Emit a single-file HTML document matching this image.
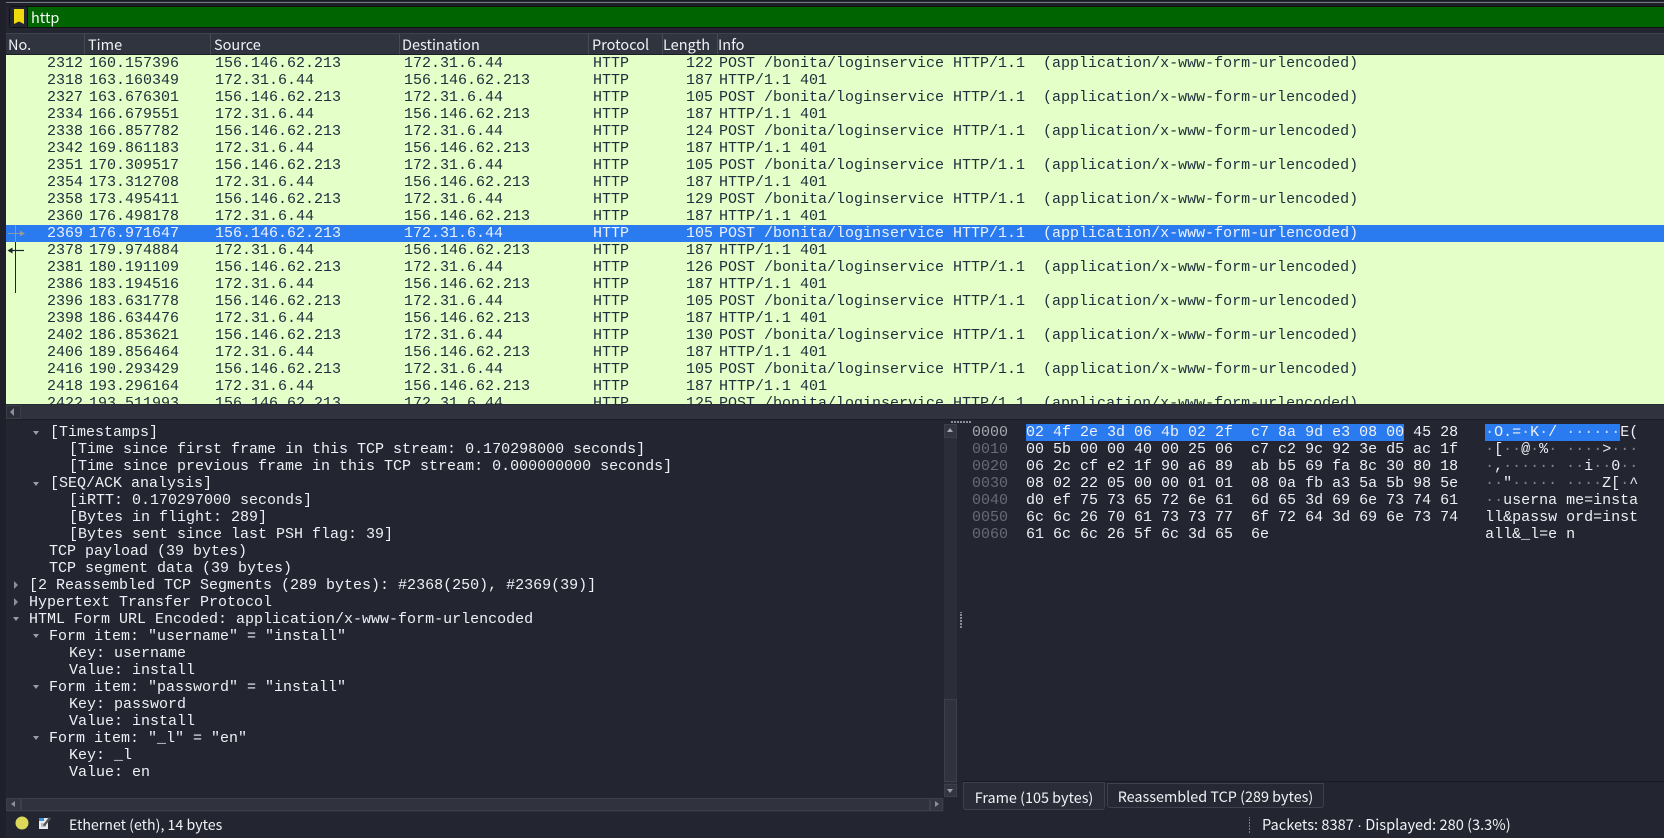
<!DOCTYPE html>
<html><head><meta charset="utf-8"><style>
html,body{margin:0;padding:0;width:1664px;height:838px;overflow:hidden;background:#232530}
*{box-sizing:border-box}
.a{position:absolute}
#app{position:relative;width:1664px;height:838px;overflow:hidden;background:#232530;font-family:"Liberation Mono",monospace;font-size:15px;color:#eef0f5}
.ui{font-family:"Noto Sans CJK SC","Liberation Sans",sans-serif}
.r{position:absolute;left:6px;width:1658px;height:17px;line-height:17px;background:#e4ffc7;color:#1f2d3d;white-space:pre}
.r span{position:absolute;top:0}
.n{right:1581px;text-align:right}.t{left:83px}.s{left:209px}.d{left:398px}.p{left:587px}.l{right:951px;text-align:right}.i{left:713px}
.sel{background:#2a7af0;color:#eaf2ff}
.h{position:absolute;top:33px;height:22px;background:#30343f;border-right:1px solid #454a55;border-top:1px solid #3f434e;border-bottom:1px solid #1c1e26;font-size:14.5px;line-height:22px;padding-left:2px;color:#f0f2f5;white-space:nowrap;overflow:hidden}
.tr{position:absolute;height:17px;line-height:17px;white-space:pre}
.hx{position:absolute;left:972px;height:17px;line-height:17px;white-space:pre}
.hx b{font-weight:normal;color:#666b75}
.dm{color:#7d828c}
.dw{color:#c9dcfb}
.tl{position:absolute;width:0;height:0}
.dn{border-left:3.5px solid transparent;border-right:3.5px solid transparent;border-top:4px solid #9a9da5}
.rt{border-top:4px solid transparent;border-bottom:4px solid transparent;border-left:4.5px solid #8d9099}
.btn{position:absolute;background:#333641;border:1px solid #3d404b}
.tb{position:absolute;background:#2a2d38;border:1px solid #3e414c;font-size:14.4px;text-align:center;color:#f0f2f5;border-radius:0 0 3px 3px;white-space:nowrap}
</style></head><body><div id="app">
<div class="a" style="left:0;top:0;width:1664px;height:1px;background:#1b1c23"></div>
<div class="a" style="left:0;top:2px;width:1664px;height:1px;background:#767984"></div>
<div class="a" style="left:0;top:3px;width:1664px;height:3px;background:#1d1f27"></div>

<div class="a" style="left:9px;top:6px;width:1655px;height:22px;background:#006400;border:1px solid #111;border-right:0;border-radius:3px 0 0 3px"></div>
<div class="a" style="left:10px;top:7px;width:18px;height:20px;background:#232530;border-right:1px solid #111"></div>
<svg class="a" style="left:13px;top:9px" width="12" height="16" viewBox="0 0 12 16"><path d="M1 0H11V15L6 12.5 1 15Z" fill="#eed90a"/></svg>
<div class="a ui" style="left:31px;top:8px;font-size:14.5px;line-height:20px;color:#f4fbf4">http</div>

<div class="h ui" style="left:6px;width:79px">No.</div>
<div class="h ui" style="left:85px;width:126px;padding-left:3px">Time</div>
<div class="h ui" style="left:211px;width:189px;padding-left:3px">Source</div>
<div class="h ui" style="left:400px;width:189px;padding-left:2px">Destination</div>
<div class="h ui" style="left:589px;width:74px;padding-left:3px">Protocol</div>
<div class="h ui" style="left:663px;width:55px;padding-left:0">Length</div>
<div class="h ui" style="left:718px;width:946px;border-right:0;padding-left:0">Info</div>

<div class="a" style="left:0;top:55px;width:1664px;height:349px;overflow:hidden">
<div style="position:absolute;left:0;top:-55px;width:1664px;height:500px">
<div class="r" style="top:55px"><span class="n">2312</span><span class="t">160.157396</span><span class="s">156.146.62.213</span><span class="d">172.31.6.44</span><span class="p">HTTP</span><span class="l">122</span><span class="i">POST /bonita/loginservice HTTP/1.1  (application/x-www-form-urlencoded)</span></div>
<div class="r" style="top:72px"><span class="n">2318</span><span class="t">163.160349</span><span class="s">172.31.6.44</span><span class="d">156.146.62.213</span><span class="p">HTTP</span><span class="l">187</span><span class="i">HTTP/1.1 401</span></div>
<div class="r" style="top:89px"><span class="n">2327</span><span class="t">163.676301</span><span class="s">156.146.62.213</span><span class="d">172.31.6.44</span><span class="p">HTTP</span><span class="l">105</span><span class="i">POST /bonita/loginservice HTTP/1.1  (application/x-www-form-urlencoded)</span></div>
<div class="r" style="top:106px"><span class="n">2334</span><span class="t">166.679551</span><span class="s">172.31.6.44</span><span class="d">156.146.62.213</span><span class="p">HTTP</span><span class="l">187</span><span class="i">HTTP/1.1 401</span></div>
<div class="r" style="top:123px"><span class="n">2338</span><span class="t">166.857782</span><span class="s">156.146.62.213</span><span class="d">172.31.6.44</span><span class="p">HTTP</span><span class="l">124</span><span class="i">POST /bonita/loginservice HTTP/1.1  (application/x-www-form-urlencoded)</span></div>
<div class="r" style="top:140px"><span class="n">2342</span><span class="t">169.861183</span><span class="s">172.31.6.44</span><span class="d">156.146.62.213</span><span class="p">HTTP</span><span class="l">187</span><span class="i">HTTP/1.1 401</span></div>
<div class="r" style="top:157px"><span class="n">2351</span><span class="t">170.309517</span><span class="s">156.146.62.213</span><span class="d">172.31.6.44</span><span class="p">HTTP</span><span class="l">105</span><span class="i">POST /bonita/loginservice HTTP/1.1  (application/x-www-form-urlencoded)</span></div>
<div class="r" style="top:174px"><span class="n">2354</span><span class="t">173.312708</span><span class="s">172.31.6.44</span><span class="d">156.146.62.213</span><span class="p">HTTP</span><span class="l">187</span><span class="i">HTTP/1.1 401</span></div>
<div class="r" style="top:191px"><span class="n">2358</span><span class="t">173.495411</span><span class="s">156.146.62.213</span><span class="d">172.31.6.44</span><span class="p">HTTP</span><span class="l">129</span><span class="i">POST /bonita/loginservice HTTP/1.1  (application/x-www-form-urlencoded)</span></div>
<div class="r" style="top:208px"><span class="n">2360</span><span class="t">176.498178</span><span class="s">172.31.6.44</span><span class="d">156.146.62.213</span><span class="p">HTTP</span><span class="l">187</span><span class="i">HTTP/1.1 401</span></div>
<div class="r sel" style="top:225px"><span class="n">2369</span><span class="t">176.971647</span><span class="s">156.146.62.213</span><span class="d">172.31.6.44</span><span class="p">HTTP</span><span class="l">105</span><span class="i">POST /bonita/loginservice HTTP/1.1  (application/x-www-form-urlencoded)</span></div>
<div class="r" style="top:242px"><span class="n">2378</span><span class="t">179.974884</span><span class="s">172.31.6.44</span><span class="d">156.146.62.213</span><span class="p">HTTP</span><span class="l">187</span><span class="i">HTTP/1.1 401</span></div>
<div class="r" style="top:259px"><span class="n">2381</span><span class="t">180.191109</span><span class="s">156.146.62.213</span><span class="d">172.31.6.44</span><span class="p">HTTP</span><span class="l">126</span><span class="i">POST /bonita/loginservice HTTP/1.1  (application/x-www-form-urlencoded)</span></div>
<div class="r" style="top:276px"><span class="n">2386</span><span class="t">183.194516</span><span class="s">172.31.6.44</span><span class="d">156.146.62.213</span><span class="p">HTTP</span><span class="l">187</span><span class="i">HTTP/1.1 401</span></div>
<div class="r" style="top:293px"><span class="n">2396</span><span class="t">183.631778</span><span class="s">156.146.62.213</span><span class="d">172.31.6.44</span><span class="p">HTTP</span><span class="l">105</span><span class="i">POST /bonita/loginservice HTTP/1.1  (application/x-www-form-urlencoded)</span></div>
<div class="r" style="top:310px"><span class="n">2398</span><span class="t">186.634476</span><span class="s">172.31.6.44</span><span class="d">156.146.62.213</span><span class="p">HTTP</span><span class="l">187</span><span class="i">HTTP/1.1 401</span></div>
<div class="r" style="top:327px"><span class="n">2402</span><span class="t">186.853621</span><span class="s">156.146.62.213</span><span class="d">172.31.6.44</span><span class="p">HTTP</span><span class="l">130</span><span class="i">POST /bonita/loginservice HTTP/1.1  (application/x-www-form-urlencoded)</span></div>
<div class="r" style="top:344px"><span class="n">2406</span><span class="t">189.856464</span><span class="s">172.31.6.44</span><span class="d">156.146.62.213</span><span class="p">HTTP</span><span class="l">187</span><span class="i">HTTP/1.1 401</span></div>
<div class="r" style="top:361px"><span class="n">2416</span><span class="t">190.293429</span><span class="s">156.146.62.213</span><span class="d">172.31.6.44</span><span class="p">HTTP</span><span class="l">105</span><span class="i">POST /bonita/loginservice HTTP/1.1  (application/x-www-form-urlencoded)</span></div>
<div class="r" style="top:378px"><span class="n">2418</span><span class="t">193.296164</span><span class="s">172.31.6.44</span><span class="d">156.146.62.213</span><span class="p">HTTP</span><span class="l">187</span><span class="i">HTTP/1.1 401</span></div>
<div class="r" style="top:395px"><span class="n">2422</span><span class="t">193.511993</span><span class="s">156.146.62.213</span><span class="d">172.31.6.44</span><span class="p">HTTP</span><span class="l">125</span><span class="i">POST /bonita/loginservice HTTP/1.1  (application/x-www-form-urlencoded)</span></div>
</div></div>

<svg class="a" style="left:6px;top:225px" width="24" height="70" viewBox="0 0 24 70">
<path d="M2 8.5H17" stroke="#8f9aa8" stroke-width="1" fill="none"/><path d="M9.5 0V17" stroke="#8f9aa8" stroke-width="1"/><path d="M14 5.5L19 8.5 14 11.5Z" fill="#8f9aa8"/>
<path d="M3 25.5H18" stroke="#1b2330" stroke-width="1.2" fill="none"/><path d="M1.5 25.5L6.5 22.5V28.5Z" fill="#1b2330"/><path d="M9.5 17V68" stroke="#1b2330" stroke-width="1"/>
</svg>

<div class="a" style="left:6px;top:404px;width:1658px;height:16px;background:#262833"></div>
<div class="a" style="left:6px;top:405px;width:1658px;height:14px;background:#30333e"></div>
<div class="btn" style="left:6px;top:405px;width:15px;height:14px;background:#2b2e39"></div>
<div class="tl" style="left:10px;top:408px;border-top:4px solid transparent;border-bottom:4px solid transparent;border-right:4.5px solid #8d9099"></div>
<div class="a" style="left:0;top:419px;width:1664px;height:1px;background:#1c1e25"></div>
<div class="a" style="left:0;top:0;width:6px;height:838px;background:#1f2029;z-index:0"></div>
<div class="a" style="left:951px;top:421px;width:20px;height:2px;background-image:repeating-linear-gradient(90deg,#8a8d95 0 2px,transparent 2px 3px)"></div>

<div class="tr" style="left:50px;top:424px">[Timestamps]</div>
<div class="tr" style="left:69px;top:441px">[Time since first frame in this TCP stream: 0.170298000 seconds]</div>
<div class="tr" style="left:69px;top:458px">[Time since previous frame in this TCP stream: 0.000000000 seconds]</div>
<div class="tr" style="left:50px;top:475px">[SEQ/ACK analysis]</div>
<div class="tr" style="left:69px;top:492px">[iRTT: 0.170297000 seconds]</div>
<div class="tr" style="left:69px;top:509px">[Bytes in flight: 289]</div>
<div class="tr" style="left:69px;top:526px">[Bytes sent since last PSH flag: 39]</div>
<div class="tr" style="left:49px;top:543px">TCP payload (39 bytes)</div>
<div class="tr" style="left:49px;top:560px">TCP segment data (39 bytes)</div>
<div class="tr" style="left:29px;top:577px">[2 Reassembled TCP Segments (289 bytes): #2368(250), #2369(39)]</div>
<div class="tr" style="left:29px;top:594px">Hypertext Transfer Protocol</div>
<div class="tr" style="left:29px;top:611px">HTML Form URL Encoded: application/x-www-form-urlencoded</div>
<div class="tr" style="left:49px;top:628px">Form item: "username" = "install"</div>
<div class="tr" style="left:69px;top:645px">Key: username</div>
<div class="tr" style="left:69px;top:662px">Value: install</div>
<div class="tr" style="left:49px;top:679px">Form item: "password" = "install"</div>
<div class="tr" style="left:69px;top:696px">Key: password</div>
<div class="tr" style="left:69px;top:713px">Value: install</div>
<div class="tr" style="left:49px;top:730px">Form item: "_l" = "en"</div>
<div class="tr" style="left:69px;top:747px">Key: _l</div>
<div class="tr" style="left:69px;top:764px">Value: en</div>

<div class="tl dn" style="left:33px;top:431px"></div>
<div class="tl dn" style="left:33px;top:482px"></div>
<div class="tl rt" style="left:14px;top:581px"></div>
<div class="tl rt" style="left:14px;top:598px"></div>
<div class="tl dn" style="left:13px;top:617px"></div>
<div class="tl dn" style="left:33px;top:634px"></div>
<div class="tl dn" style="left:33px;top:685px"></div>
<div class="tl dn" style="left:33px;top:736px"></div>

<!-- vertical scrollbar -->
<div class="a" style="left:944px;top:424px;width:13px;height:372px;background:#2b2e38"></div>
<div class="btn" style="left:944px;top:424px;width:13px;height:14px"></div>
<div class="tl" style="left:947px;top:428px;border-left:3.5px solid transparent;border-right:3.5px solid transparent;border-bottom:4px solid #a7a9b0"></div>
<div class="btn" style="left:944px;top:699px;width:13px;height:83px;background:#30333e"></div>
<div class="btn" style="left:944px;top:784px;width:13px;height:13px"></div>
<div class="tl dn" style="left:947px;top:789px"></div>
<!-- horizontal scrollbar -->
<div class="a" style="left:6px;top:798px;width:938px;height:14px;background:#2b2e38"></div>
<div class="btn" style="left:21px;top:798px;width:909px;height:13px;background:#30333e"></div>
<div class="btn" style="left:6px;top:798px;width:15px;height:13px"></div>
<div class="tl" style="left:11px;top:801px;border-top:3.5px solid transparent;border-bottom:3.5px solid transparent;border-right:4px solid #8d9099"></div>
<div class="btn" style="left:930px;top:798px;width:13px;height:13px"></div>
<div class="tl" style="left:935px;top:801px;border-top:3.5px solid transparent;border-bottom:3.5px solid transparent;border-left:4px solid #8d9099"></div>

<!-- vertical splitter -->
<div class="a" style="left:960px;top:612px;width:2px;height:16px;background-image:repeating-linear-gradient(0deg,#8a8d95 0 2px,transparent 2px 3px)"></div>

<!-- hex pane -->
<div class="a" style="left:1026px;top:424px;width:378px;height:17px;background:#2a7af0"></div>
<div class="a" style="left:1485px;top:424px;width:135px;height:17px;background:#2a7af0"></div>
<div class="hx" style="top:424px"><span style="color:#a4a7ae">0000</span>  02 4f 2e 3d 06 4b 02 2f  c7 8a 9d e3 08 00 45 28   <span class="dw">·</span>O.=<span class="dw">·</span>K<span class="dw">·</span>/ <span class="dw">······</span>E(</div>
<div class="hx" style="top:441px"><b>0010</b>  00 5b 00 00 40 00 25 06  c7 c2 9c 92 3e d5 ac 1f   <span class="dm">·</span>[<span class="dm">··</span>@<span class="dm">·</span>%<span class="dm">·</span> <span class="dm">····</span>&gt;<span class="dm">···</span></div>
<div class="hx" style="top:458px"><b>0020</b>  06 2c cf e2 1f 90 a6 89  ab b5 69 fa 8c 30 80 18   <span class="dm">·</span>,<span class="dm">······</span> <span class="dm">··</span>i<span class="dm">··</span>0<span class="dm">··</span></div>
<div class="hx" style="top:475px"><b>0030</b>  08 02 22 05 00 00 01 01  08 0a fb a3 5a 5b 98 5e   <span class="dm">··</span>"<span class="dm">·····</span> <span class="dm">····</span>Z[<span class="dm">·</span>^</div>
<div class="hx" style="top:492px"><b>0040</b>  d0 ef 75 73 65 72 6e 61  6d 65 3d 69 6e 73 74 61   <span class="dm">··</span>userna me=insta</div>
<div class="hx" style="top:509px"><b>0050</b>  6c 6c 26 70 61 73 73 77  6f 72 64 3d 69 6e 73 74   ll&amp;passw ord=inst</div>
<div class="hx" style="top:526px"><b>0060</b>  61 6c 6c 26 5f 6c 3d 65  6e                        all&amp;_l=e n</div>

<div class="a" style="left:962px;top:781px;width:702px;height:1px;background:#191a21"></div>
<div class="tb ui" style="left:963px;top:782px;width:142px;height:28px;line-height:30px;background:#2a2d38">Frame (105 bytes)</div>
<div class="tb ui" style="left:1107px;top:783px;width:217px;height:25px;line-height:25px;background:#262833">Reassembled TCP (289 bytes)</div>

<!-- status -->
<svg class="a" style="left:14px;top:815px" width="44" height="18" viewBox="0 0 44 18"><circle cx="8" cy="8" r="6.5" fill="#dcd85a"/>
<path d="M25 3H34V14H25Z" fill="#e8ecef"/><path d="M25 3H30V6H25Z" fill="#3a8fd8"/><path d="M27 9H31M27 11H32" stroke="#888" stroke-width="1"/><path d="M29 10L35 2 37 3.5 31 11Z" fill="#555"/></svg>
<div class="a ui" style="left:69px;top:815px;font-size:14.2px;line-height:20px;color:#f0f2f5">Ethernet (eth), 14 bytes</div>
<div class="a" style="left:1249px;top:817px;width:1px;height:16px;background-image:repeating-linear-gradient(0deg,#7b7e86 0 2px,transparent 2px 3px)"></div>
<div class="a ui" style="left:1262px;top:815px;font-size:14.6px;line-height:20px;color:#f0f2f5;white-space:pre">Packets: 8387 <span style="font-family:'Liberation Sans',sans-serif">·</span> Displayed: 280 (3.3%)</div>
</div></body></html>
